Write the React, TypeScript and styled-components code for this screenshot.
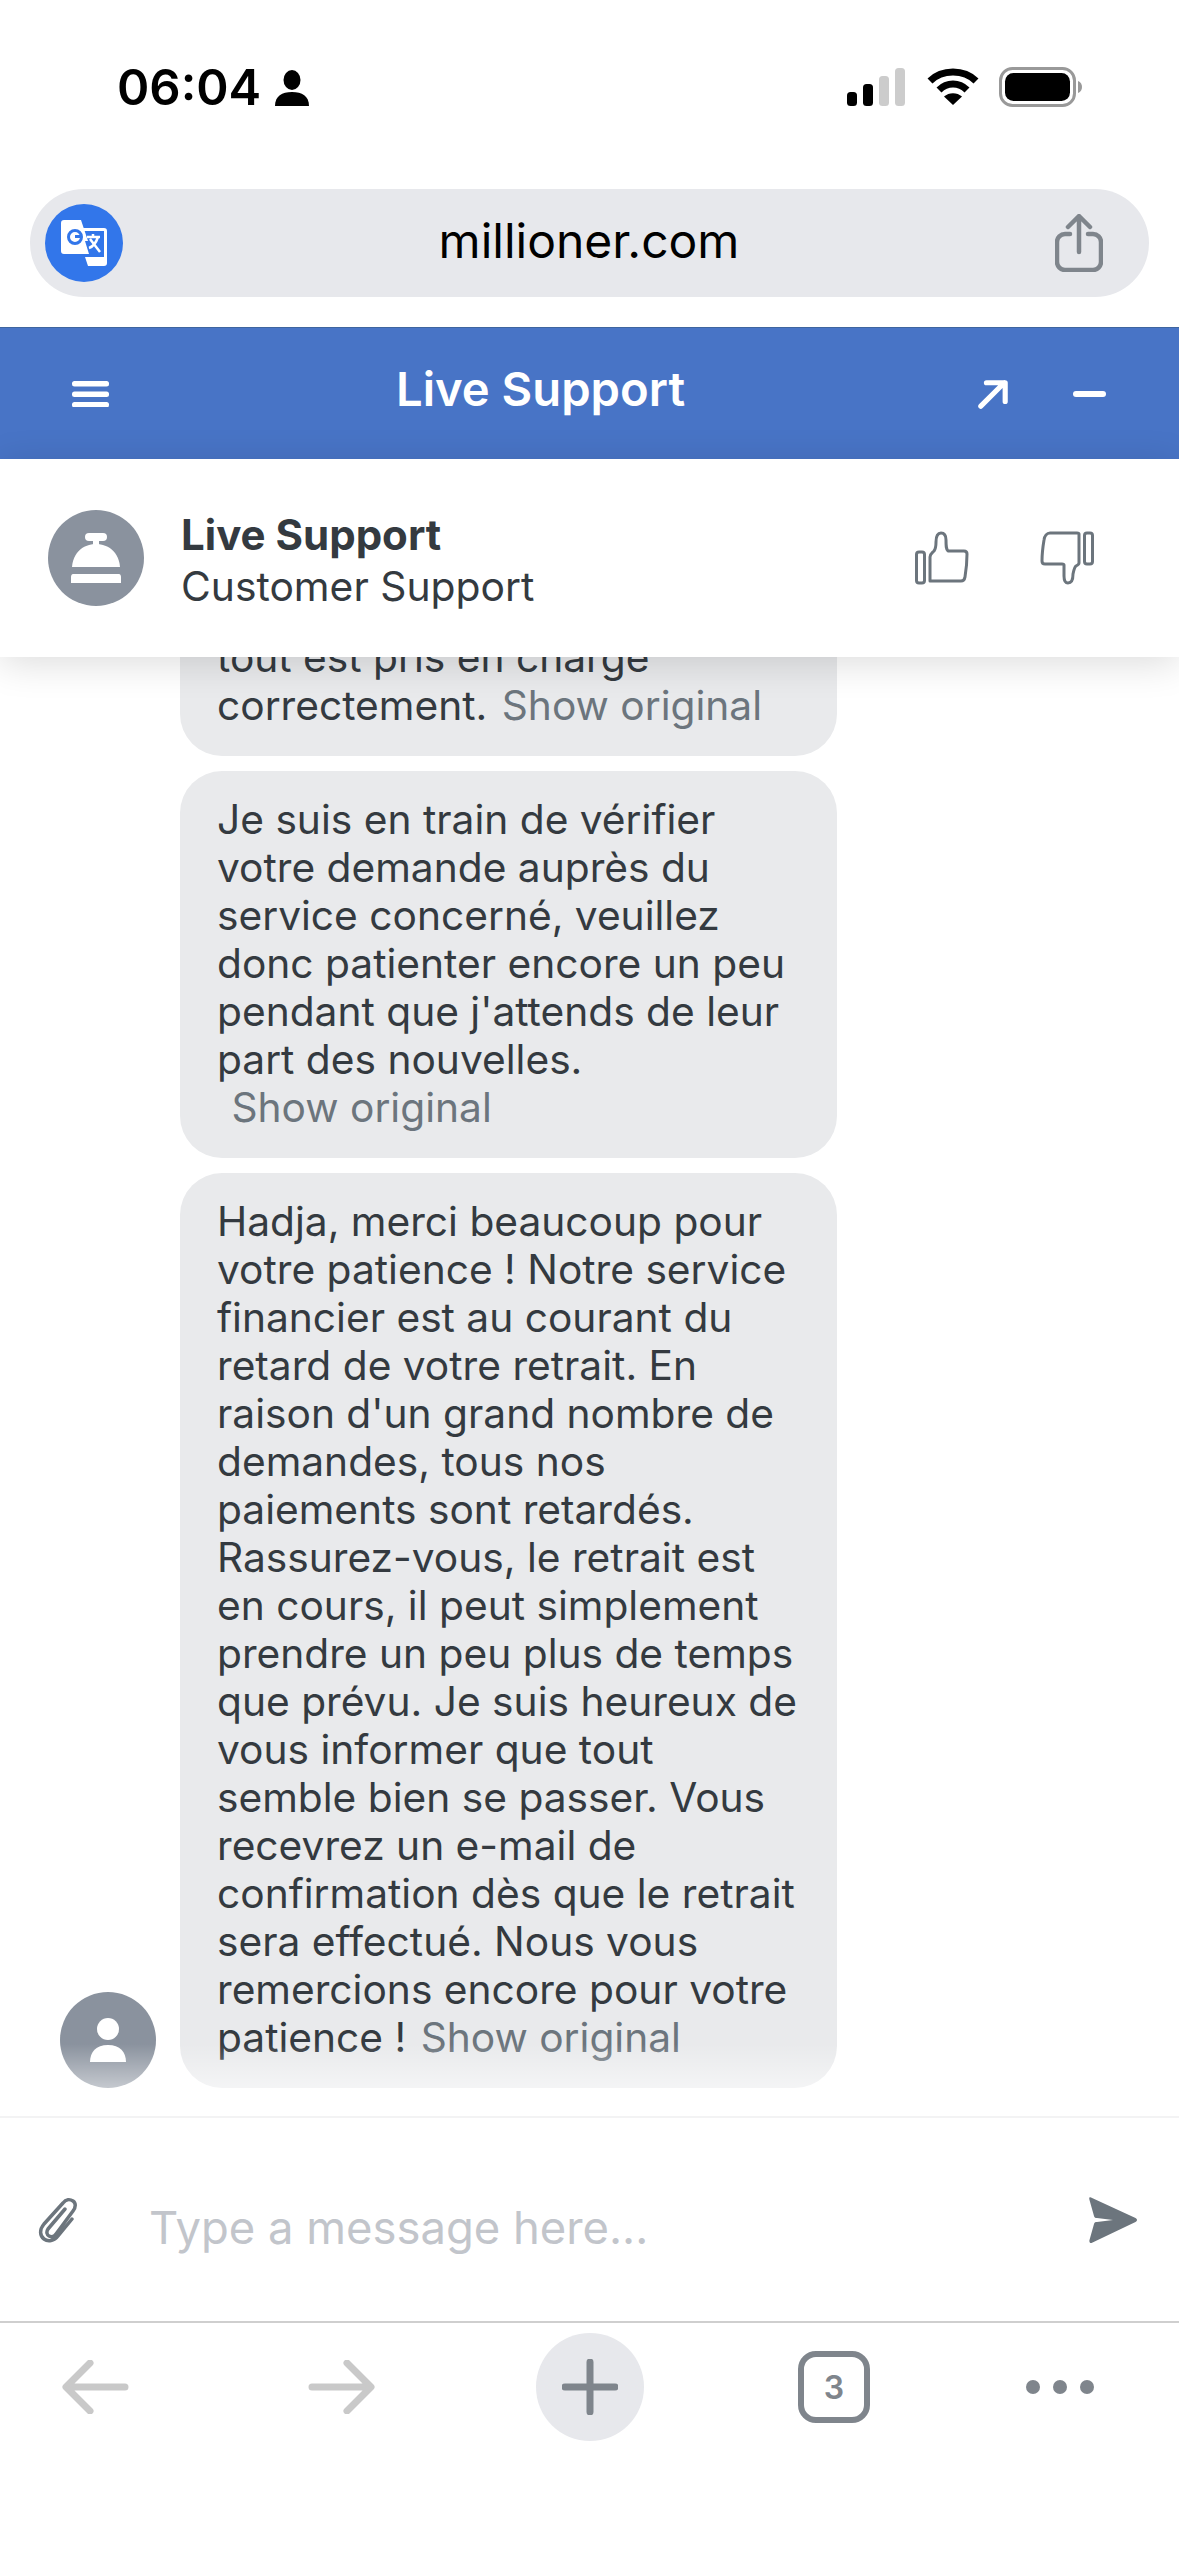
import styled, { createGlobalStyle } from "styled-components";

const GlobalStyle = createGlobalStyle`
    html, body {
        margin: 0;
        padding: 0;
        background: #fff;
    }
    * {
        box-sizing: border-box;
    }
`;

const Page = styled.div`
    width: 1179px;
    height: 2556px;
    display: flex;
    flex-direction: column;
    overflow: hidden;
    background: #fff;
    font-family: Inter, "Liberation Sans", sans-serif;
    color: #343a40;
`;

const StatusBar = styled.div`
    height: 189px;
    flex: none;
    display: flex;
    justify-content: space-between;
    align-items: flex-start;
    padding: 63px 96px 0 117px;
`;

const TimeGroup = styled.div`
    display: flex;
    align-items: center;
    gap: 14px;
`;

const Time = styled.span`
    font-size: 49px;
    line-height: 50px;
    font-weight: 600;
    color: #000;
    letter-spacing: 0;
`;

const StatusIcons = styled.div`
    display: flex;
    align-items: center;
    gap: 20px;
    padding-top: 4px;
`;

const AddressBar = styled.div`
    flex: none;
    height: 108px;
    margin: 0 30px 30px;
    padding: 0 46px 0 15px;
    border-radius: 54px;
    background: #e7e8ec;
    display: flex;
    align-items: center;
    justify-content: space-between;
`;

const TranslateBadge = styled.div`
    width: 78px;
    height: 78px;
    border-radius: 50%;
    background: #3276ea;
    display: flex;
    align-items: center;
    justify-content: center;
`;

const Url = styled.span`
    font-size: 48px;
    line-height: 60px;
    color: #000;
    margin-top: -4px;
`;

const BlueHeader = styled.div`
    flex: none;
    height: 132px;
    background: #4874c6;
    border-top: 1px solid #3f659f;
    display: flex;
    align-items: center;
    justify-content: space-between;
    padding: 0 73px 0 72px;
    color: #fff;
`;

const HeaderTitle = styled.span`
    font-size: 47.2px;
    line-height: 60px;
    font-weight: 600;
    margin-right: 6px;
    margin-top: -10px;
`;

const HeaderActions = styled.div`
    display: flex;
    align-items: center;
    gap: 65px;
`;

const AgentBar = styled.div`
    flex: none;
    height: 198px;
    background: #fff;
    display: flex;
    align-items: center;
    padding: 0 85px 0 48px;
    position: relative;
    z-index: 2;
    box-shadow: 0 6px 36px rgba(0, 0, 0, 0.14);
`;

const Avatar = styled.div`
    width: 96px;
    height: 96px;
    flex: none;
    border-radius: 50%;
    background: #8a929e;
    display: flex;
    align-items: center;
    justify-content: center;
`;

const AgentText = styled.div`
    margin-left: 37px;
    padding-top: 4px;
    flex: 1;
    display: flex;
    flex-direction: column;
`;

const AgentName = styled.span`
    font-size: 42px;
    line-height: 51px;
    font-weight: 700;
`;

const AgentRole = styled.span`
    font-size: 40.8px;
    line-height: 52px;
`;

const Rating = styled.div`
    display: flex;
    align-items: center;
    gap: 71px;
`;

const Chat = styled.div`
    flex: 1;
    min-height: 0;
    overflow: hidden;
    position: relative;
    display: flex;
    align-items: flex-end;
    padding: 0 0 28px 60px;
    gap: 24px;
`;

const ChatFade = styled.div`
    position: absolute;
    left: 0;
    right: 0;
    bottom: 28px;
    height: 44px;
    background: linear-gradient(rgba(255, 255, 255, 0), rgba(255, 255, 255, 0.5));
`;

const Bubbles = styled.div`
    display: flex;
    flex-direction: column;
    gap: 15px;
    width: 657px;
`;

const Bubble = styled.div`
    background: #e9eaec;
    border-radius: 42px;
    padding: 25px 20px 26px 37px;
    font-size: 40.7px;
    line-height: 48px;
    white-space: nowrap;
`;

const Original = styled.span`
    color: #6c757d;
    margin-left: 3px;
`;

const Composer = styled.div`
    flex: none;
    height: 207px;
    border-top: 2px solid #f3f3f4;
    border-bottom: 2px solid #cfcfcf;
    display: flex;
    align-items: center;
    padding: 0 42px 0 38px;
`;

const Placeholder = styled.span`
    flex: 1;
    margin-left: 69px;
    font-size: 45.4px;
    line-height: 56px;
    color: #c2c5cb;
    margin-top: 16px;
`;

const BottomNav = styled.div`
    flex: none;
    height: 233px;
    padding-top: 10px;
    display: grid;
    grid-template-columns: 190px 302px 196px 292px 160px;
    justify-items: center;
    align-items: start;
`;

const NavSlot = styled.div<{ $width: number }>`
    width: ${(p) => p.$width}px;
    height: 108px;
    display: flex;
    align-items: center;
    justify-content: center;
`;

const PlusCircle = styled(NavSlot)`
    border-radius: 50%;
    background: #e7e8ec;
`;

const TabCount = styled.div`
    width: 72px;
    height: 72px;
    border: 6px solid #7f858c;
    border-radius: 18px;
    display: flex;
    align-items: center;
    justify-content: center;
    font-size: 32px;
    font-weight: 600;
    color: #7f858c;
`;

const Dots = styled.div`
    display: flex;
    gap: 13px;
`;

const Dot = styled.span`
    width: 14px;
    height: 14px;
    border-radius: 50%;
    background: #7f858c;
`;

const bubbleOne = ["tout est pris en charge"];
const bubbleTwo = [
    "Je suis en train de vérifier",
    "votre demande auprès du",
    "service concerné, veuillez",
    "donc patienter encore un peu",
    "pendant que j'attends de leur",
    "part des nouvelles.",
];
const bubbleThree = [
    "Hadja, merci beaucoup pour",
    "votre patience ! Notre service",
    "financier est au courant du",
    "retard de votre retrait. En",
    "raison d'un grand nombre de",
    "demandes, tous nos",
    "paiements sont retardés.",
    "Rassurez-vous, le retrait est",
    "en cours, il peut simplement",
    "prendre un peu plus de temps",
    "que prévu. Je suis heureux de",
    "vous informer que tout",
    "semble bien se passer. Vous",
    "recevrez un e-mail de",
    "confirmation dès que le retrait",
    "sera effectué. Nous vous",
    "remercions encore pour votre",
];

const Lines = ({ lines }: { lines: string[] }) => (
    <>
        {lines.map((line) => (
            <div key={line}>{line}</div>
        ))}
    </>
);

const App = () => {
    return (
        <Page>
            <GlobalStyle />
            <StatusBar>
                <TimeGroup>
                    <Time>06:04</Time>
                    <svg width="34" height="36" viewBox="0 0 34 36" fill="#000">
                        <ellipse cx="17" cy="10" rx="8.5" ry="10" />
                        <path d="M0 36c0-10 7-14 17-14s17 4 17 14z" />
                    </svg>
                </TimeGroup>
                <StatusIcons>
                    <svg width="60" height="38" viewBox="0 0 60 38">
                        <rect x="0" y="24" width="10" height="14" rx="3.5" fill="#000" />
                        <rect x="16" y="16" width="10" height="22" rx="3.5" fill="#000" />
                        <rect x="32" y="8" width="10" height="30" rx="3.5" fill="#ccc" />
                        <rect x="48" y="0" width="10" height="38" rx="3.5" fill="#ccc" />
                    </svg>
                    <svg width="52" height="38" viewBox="0 0 52 38" fill="none" stroke="#000" strokeWidth="7">
                        <path d="M3 13C15 1 37 1 49 13" />
                        <path d="M12 22C20 14 32 14 40 22" />
                        <path d="M26 37l-9-8.500c5-4.500 13-4.500 18 0z" fill="#000" stroke="none" />
                    </svg>
                    <svg width="84" height="40" viewBox="0 0 84 40">
                        <rect x="1.500" y="1.500" width="74" height="37" rx="12" fill="none" stroke="#999" strokeWidth="3" />
                        <rect x="6" y="6" width="65" height="28" rx="8.500" fill="#000" />
                        <path d="M79 14c3 1 4 3.500 4 6s-1 5-4 6z" fill="#999" />
                    </svg>
                </StatusIcons>
            </StatusBar>

            <AddressBar>
                <TranslateBadge>
                    <svg width="46" height="46" viewBox="0 0 46 46">
                        <path d="M3 0h17l7 21 -3 0 4 13H3a3 3 0 0 1-3-3V3a3 3 0 0 1 3-3z" fill="#fff" />
                        <path d="M21 8h22a3 3 0 0 1 3 3v32a3 3 0 0 1-3 3H27l-3-9 0 0h19V11H22z" fill="#fff" />
                        <circle cx="14" cy="17" r="6.500" fill="none" stroke="#3276ea" strokeWidth="3" />
                        <path d="M14 16.500h7" stroke="#3276ea" strokeWidth="3" />
                        <path d="M26 17h13M32 14v3M37 17c-2 6-6 10-9 11M29 19l10 13" fill="none" stroke="#fff" strokeWidth="2.500" />
                    </svg>
                </TranslateBadge>
                <Url>millioner.com</Url>
                <svg width="48" height="58" viewBox="0 0 48 58" fill="none" stroke="#7f858c" strokeWidth="4.500" strokeLinecap="round" strokeLinejoin="round">
                    <path d="M15 20H10a8 8 0 0 0-8 8v20a8 8 0 0 0 8 8h28a8 8 0 0 0 8-8V28a8 8 0 0 0-8-8h-5" />
                    <path d="M24 38V3M13 13L24 2l11 11" />
                </svg>
            </AddressBar>

            <BlueHeader>
                <svg width="37" height="26" viewBox="0 0 37 26" fill="#fff">
                    <rect y="0" width="37" height="5.500" rx="2.500" />
                    <rect y="10.500" width="37" height="5.500" rx="2.500" />
                    <rect y="21" width="37" height="5.500" rx="2.500" />
                </svg>
                <HeaderTitle>Live Support</HeaderTitle>
                <HeaderActions>
                    <svg width="30" height="30" viewBox="0 0 32 32" fill="none" stroke="#fff" strokeWidth="5.500" strokeLinecap="round" strokeLinejoin="round">
                        <path d="M3 29L28 4M9 4h20v20" />
                    </svg>
                    <svg width="33" height="6" viewBox="0 0 33 6">
                        <rect width="33" height="6" rx="3" fill="#fff" />
                    </svg>
                </HeaderActions>
            </BlueHeader>

            <AgentBar>
                <Avatar>
                    <svg width="50" height="50" viewBox="0 0 50 50" fill="#fff">
                        <rect x="14" y="0" width="22" height="8" rx="4" />
                        <rect x="22" y="6" width="6" height="6" />
                        <path d="M1 34C2 20 12 11 25 11s23 9 24 23z" />
                        <path d="M2 41h46c1 0 2 1 2 3v6H0v-6c0-2 1-3 2-3z" />
                    </svg>
                </Avatar>
                <AgentText>
                    <AgentName>Live Support</AgentName>
                    <AgentRole>Customer Support</AgentRole>
                </AgentText>
                <Rating>
                    <svg width="54" height="54" viewBox="0 0 54 54" fill="none" stroke="#6c757d" strokeWidth="3" strokeLinejoin="round">
                        <rect x="1.500" y="21" width="8" height="31" rx="2.500" />
                        <path d="M15 50V26c0-3 2-4 4-6 1.500-2 2-3 2-9 0-7 2-9 5-9s5 2 5 7c0 6 0 9 2 11h16c2 0 3 1 3 3 0 5-1 17-2 23-.5 3-2 4-4 4H17c-1.500 0-2-.5-2-1z" />
                    </svg>
                    <svg width="54" height="54" viewBox="0 0 54 54" fill="none" stroke="#6c757d" strokeWidth="3" strokeLinejoin="round">
                        <rect x="44.500" y="2" width="8" height="31" rx="2.500" />
                        <path d="M39 3v29c0 1-1 2-3 3-1.500 1-2 3-3 8 0 7-2 9-5 9s-4-2-4-7V34c0-1-1-1-2-1H5c-2 0-3-1-3-3 0-6 1-15 2-21 .5-4 3-7 6-7h27c1 0 2 0 2 1z" />
                    </svg>
                </Rating>
            </AgentBar>

            <Chat>
                <Avatar>
                    <svg width="36" height="44" viewBox="0 0 36 44" fill="#fff">
                        <ellipse cx="18" cy="11" rx="11" ry="11" />
                        <path d="M0 44c0-10 6-17 18-17s18 7 18 17z" />
                    </svg>
                </Avatar>
                <Bubbles>
                    <Bubble>
                        <Lines lines={bubbleOne} />
                        correctement. <Original>Show original</Original>
                    </Bubble>
                    <Bubble>
                        <Lines lines={bubbleTwo} />
                        <Original>&nbsp;Show original</Original>
                    </Bubble>
                    <Bubble>
                        <Lines lines={bubbleThree} />
                        patience ! <Original>Show original</Original>
                    </Bubble>
                </Bubbles>
                <ChatFade />
            </Chat>

            <Composer>
                <svg width="42" height="46" viewBox="0 0 42 46" fill="none" stroke="#6c757d" strokeWidth="3.500" strokeLinecap="round" strokeLinejoin="round">
                    <path d="M27 12L10 32c-2 3-1 6 1 7s5 1 7-2L35 14c3-4 3-8 0-10s-7-2-10 2L6 27c-5 6-4 12 0 15s10 2 14-3l14-17" />
                </svg>
                <Placeholder>Type a message here...</Placeholder>
                <svg width="48" height="48" viewBox="0 0 48 48" fill="#6c757d">
                    <path d="M2 1.500C0 .5 0 2 .5 4L5 20c.5 1.500 1 2 3 2l16 2-16 2c-2 0-2.500.5-3 2L.5 44c-.5 2 .5 3.500 2 3l44-21c2-1 2-3 0-4z" />
                </svg>
            </Composer>

            <BottomNav>
                <NavSlot $width={67}>
                    <svg width="67" height="54" viewBox="0 0 67 54" fill="none" stroke="#c9c9c9" strokeWidth="7" strokeLinecap="round" strokeLinejoin="round">
                        <path d="M63 27H5M28 3L4 27l24 24" />
                    </svg>
                </NavSlot>
                <NavSlot $width={67}>
                    <svg width="67" height="54" viewBox="0 0 67 54" fill="none" stroke="#c9c9c9" strokeWidth="7" strokeLinecap="round" strokeLinejoin="round">
                        <path d="M4 27h58M39 3l24 24-24 24" />
                    </svg>
                </NavSlot>
                <PlusCircle $width={108}>
                    <svg width="56" height="56" viewBox="0 0 56 56" stroke="#7f858c" strokeWidth="7" strokeLinecap="round">
                        <path d="M28 3v50M3 28h50" />
                    </svg>
                </PlusCircle>
                <NavSlot $width={72}>
                    <TabCount>3</TabCount>
                </NavSlot>
                <NavSlot $width={68}>
                    <Dots>
                        <Dot />
                        <Dot />
                        <Dot />
                    </Dots>
                </NavSlot>
            </BottomNav>
        </Page>
    );
};

export default App;
